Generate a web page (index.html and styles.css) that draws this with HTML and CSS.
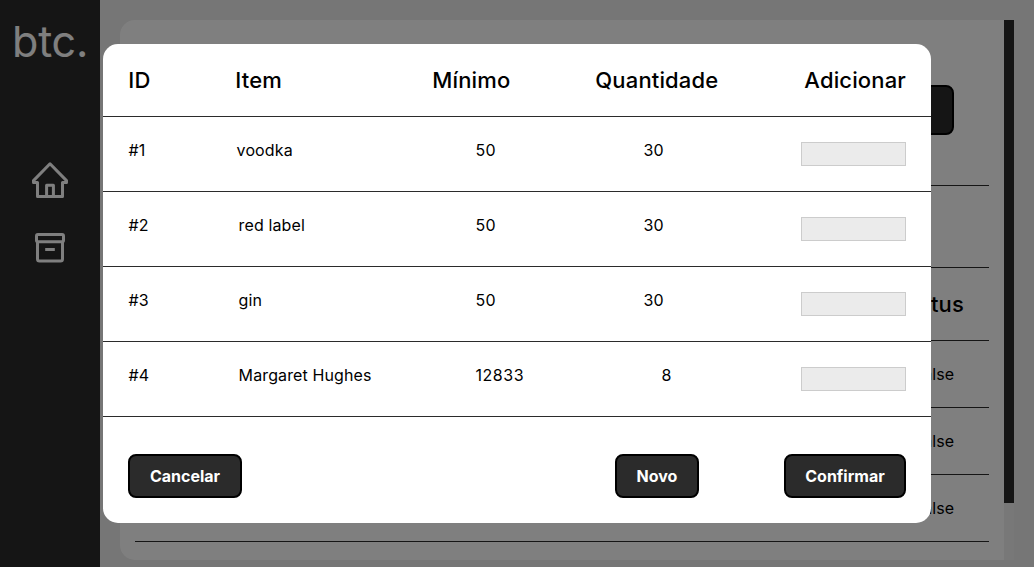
FILE: index.html
```html
<!DOCTYPE html>
<html lang="pt-BR">
<head>
<meta charset="utf-8">
<title>btc.</title>
<link rel="stylesheet" href="styles.css">
</head>
<body>
<div class="app">
  <aside class="sidebar">
    <div class="logo">btc.</div>
    <nav class="nav">
      <svg class="icon" width="40" height="40" viewBox="0 0 40 40"><path d="M20 3.8 3.5 20.6V22.6H7.5V36.6H32.5V22.6H36.5V20.6ZM16.6 36V25.3h6.8V36"/></svg>
      <svg class="icon" width="40" height="40" viewBox="0 0 40 40"><rect x="6.5" y="6.5" width="27" height="7.2" rx="1.4"/><path d="M7.5 13.7v17.4a2 2 0 0 0 2 2h21a2 2 0 0 0 2-2V13.7M15.2 21.5h9.6"/></svg>
    </nav>
  </aside>
  <main class="content">
    <section class="panel">
      <div class="toolbar"><button class="btn open">Estoque</button></div>
      <div class="spacer"></div>
      <div class="line head">Status</div>
      <div class="line">false</div>
      <div class="line">false</div>
      <div class="line">false</div>
    </section>
    <div class="scrollbar"><div class="thumb"></div></div>
  </main>
</div>
<div class="overlay">
  <div class="modal">
    <div class="row titles"><span>ID</span><span>Item</span><span>Mínimo</span><span>Quantidade</span><span class="last">Adicionar</span></div>
    <div class="row r1"><span>#1</span><span class="item">voodka</span><span class="min">50</span><span class="qty">30</span><input class="amount"></div>
    <div class="row r2"><span>#2</span><span class="item">red label</span><span class="min">50</span><span class="qty">30</span><input class="amount"></div>
    <div class="row r3"><span>#3</span><span class="item">gin</span><span class="min">50</span><span class="qty">30</span><input class="amount"></div>
    <div class="row r4"><span>#4</span><span class="item">Margaret Hughes</span><span class="min">12833</span><span class="qty">8</span><input class="amount"></div>
    <div class="actions">
      <button class="btn cancel">Cancelar</button>
      <button class="btn new">Novo</button>
      <button class="btn confirm">Confirmar</button>
    </div>
  </div>
</div>
</body>
</html>
```

FILE: styles.css
```css
* { box-sizing: border-box; }
body { margin: 0; height: 567px; overflow: hidden; background: #ececec; color: #000; font: 16px/20px Inter, "Liberation Sans", sans-serif; }
.app { display: flex; height: 567px; }
.sidebar { width: 100px; background: #2b2b2b; color: #fff; }
.logo { height: 160px; padding: 14px 0 0 12px; font-size: 43px; line-height: 54px; font-weight: 400; letter-spacing: -.2px; }
.nav { display: flex; flex-direction: column; align-items: center; gap: 28px; }
.icon { fill: none; stroke: #fff; stroke-width: 3; stroke-linejoin: round; }
.content { display: flex; flex: 1; padding: 20px 20px 7px; }
.panel { flex: 1; padding: 0 15px; background: #fff; border-radius: 15px 0 0 15px; }
.scrollbar { width: 10px; background: #f1f1f1; }
.thumb { height: 483px; background: #2b2b2b; }
.toolbar { display: flex; justify-content: flex-end; height: 166px; padding: 65px 35px 0 0; border-bottom: 1px solid #2b2b2b; }
.spacer { height: 82px; border-bottom: 1px solid #2b2b2b; }
.line { height: 67px; padding: 23px 35px 0 0; border-bottom: 1px solid #2b2b2b; text-align: right; }
.line.head { height: 73px; padding: 22px 25px 0 0; font-size: 22px; line-height: 28px; font-weight: 540; letter-spacing: .15px; }
.btn { height: 44px; padding: 0; border: 2px solid #000; border-radius: 8px; background: #2b2b2b; color: #fff; font: bold 16px/20px Inter, "Liberation Sans", sans-serif; }
.open { width: 120px; height: 50px; }
.overlay { position: fixed; inset: 0; display: flex; justify-content: center; align-items: flex-start; padding-top: 44px; background: rgba(0, 0, 0, .5); }
.modal { width: 828px; height: 479px; border-radius: 15px; background: #fff; }
.row { display: grid; grid-template-columns: 107px 197px 163px 1fr 105px; height: 75px; padding: 23px 25px 0; border-bottom: 1px solid #2b2b2b; letter-spacing: .12px; text-indent: .6px; }
.titles { height: 73px; padding-top: 22px; font-size: 22px; line-height: 28px; font-weight: 540; letter-spacing: .15px; text-indent: .3px; }
.last { justify-self: end; }
.item { padding-left: 3px; }
.r1 .item { padding-left: 1px; }
.min { padding-left: 43px; }
.r4 .min { letter-spacing: .5px; }
.qty { padding-left: 48px; }
.r4 .qty { padding-left: 66px; }
.amount { width: 105px; height: 24px; margin: 2px 0 0; border: 1px solid #ccc; background: #ebebeb; }
.actions { display: flex; padding: 37px 25px 0; }
.cancel { width: 114px; }
.new { width: 84px; margin-left: auto; }
.confirm { width: 122px; margin-left: 85px; }
```
